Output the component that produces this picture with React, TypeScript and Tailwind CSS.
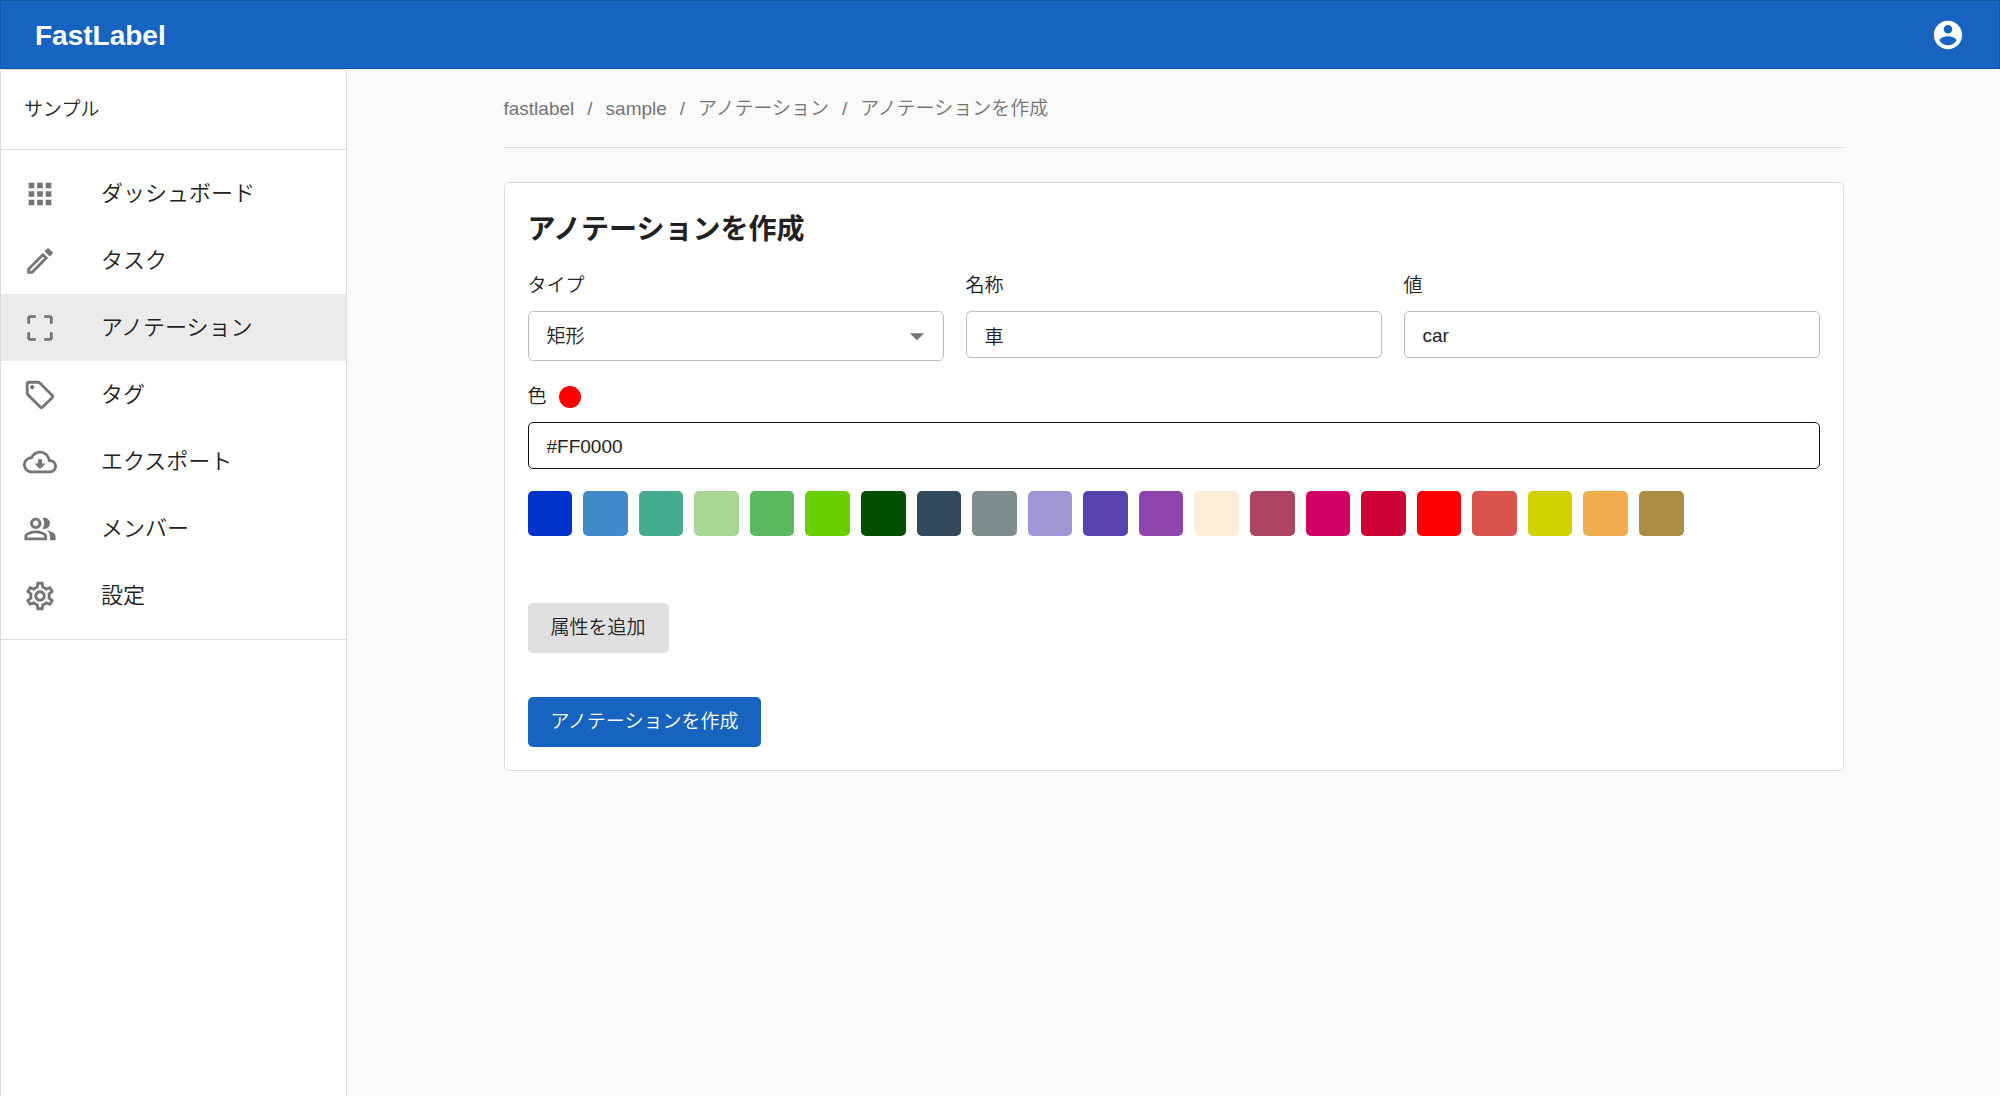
import { useState } from 'react'
import type { ReactNode } from 'react'
import { MdApps, MdArrowDropDown, MdCropFree, MdOutlineLocalOffer, MdOutlineSettings } from 'react-icons/md'

interface IconProps {
  className?: string
}

function SvgIcon({ className, children }: IconProps & { children: ReactNode }) {
  return (
    <svg viewBox="0 0 24 24" className={className} fill="currentColor" aria-hidden="true">
      {children}
    </svg>
  )
}

function AccountIcon({ className }: IconProps) {
  return (
    <SvgIcon className={className}>
      <path d="M12 2C6.48 2 2 6.48 2 12s4.48 10 10 10 10-4.48 10-10S17.52 2 12 2zm0 3c1.66 0 3 1.34 3 3s-1.34 3-3 3-3-1.34-3-3 1.34-3 3-3zm0 14.2c-2.5 0-4.71-1.28-6-3.22.03-1.99 4-3.08 6-3.08 1.99 0 5.97 1.09 6 3.08-1.29 1.94-3.5 3.22-6 3.22z" />
    </SvgIcon>
  )
}

function PencilIcon({ className }: IconProps) {
  return (
    <SvgIcon className={className}>
      <path d="M14.06 9.02l.92.92L5.92 19H5v-.92l9.06-9.06M17.66 3c-.25 0-.51.1-.7.29l-1.83 1.83 3.75 3.75 1.83-1.83c.39-.39.39-1.02 0-1.41l-2.34-2.34c-.2-.2-.45-.29-.71-.29zm-3.6 3.19L3 17.25V21h3.75L17.81 9.94l-3.75-3.75z" />
    </SvgIcon>
  )
}

function CloudDownloadIcon({ className }: IconProps) {
  return (
    <SvgIcon className={className}>
      <path d="M19.35 10.04C18.67 6.59 15.64 4 12 4 9.11 4 6.6 5.64 5.35 8.04 2.34 8.36 0 10.91 0 14c0 3.31 2.69 6 6 6h13c2.76 0 5-2.24 5-5 0-2.64-2.05-4.78-4.65-4.96zM19 18H6c-2.21 0-4-1.79-4-4 0-2.05 1.53-3.76 3.56-3.97l1.07-.11.5-.95C8.08 7.14 9.94 6 12 6c2.62 0 4.88 1.86 5.39 4.43l.3 1.5 1.53.11c1.56.1 2.78 1.41 2.78 2.96 0 1.65-1.35 3-3 3z" />
      <path d="M13.45 10h-2.9v3H8l4 4 4-4h-2.55z" />
    </SvgIcon>
  )
}

function PeopleIcon({ className }: IconProps) {
  return (
    <SvgIcon className={className}>
      <path d="M16.67 13.13C18.04 14.06 19 15.32 19 17v3h4v-3c0-2.18-3.57-3.47-6.33-3.87z" />
      <path d="M15 12c2.21 0 4-1.79 4-4s-1.79-4-4-4c-.47 0-.91.1-1.33.24C14.5 5.27 15 6.58 15 8s-.5 2.73-1.33 3.76c.42.14.86.24 1.33.24z" />
      <path d="M9 12c2.21 0 4-1.79 4-4s-1.79-4-4-4-4 1.79-4 4 1.79 4 4 4zm0-6c1.1 0 2 .9 2 2s-.9 2-2 2-2-.9-2-2 .9-2 2-2zM9 13c-2.67 0-8 1.34-8 4v3h16v-3c0-2.66-5.33-4-8-4zm6 5H3v-.99C3.2 16.29 6.3 15 9 15s5.8 1.29 6 2v1z" />
    </SvgIcon>
  )
}

const menuItems = [
  { label: 'ダッシュボード', icon: MdApps },
  { label: 'タスク', icon: PencilIcon },
  { label: 'アノテーション', icon: MdCropFree, active: true },
  { label: 'タグ', icon: MdOutlineLocalOffer },
  { label: 'エクスポート', icon: CloudDownloadIcon },
  { label: 'メンバー', icon: PeopleIcon },
  { label: '設定', icon: MdOutlineSettings },
]

const breadcrumbs = ['fastlabel', 'sample', 'アノテーション', 'アノテーションを作成']

const colors = [
  '#0033CC', '#428BCA', '#44AD8E', '#A8D695', '#5CB85C', '#69D100', '#004E00',
  '#34495E', '#7F8C8D', '#A295D6', '#5843AD', '#8E44AD', '#FFECDB', '#AD4363',
  '#D10069', '#CC0033', '#FF0000', '#D9534F', '#D1D100', '#F0AD4E', '#AD8D43',
]

const fieldClass =
  'block w-full rounded-[5px] border bg-white px-[18px] pt-0.5 text-[19px] text-[#212121] outline-none'

function Header() {
  return (
    <header className="flex h-[69px] items-center justify-between border border-[#1155a5] bg-[#1764c0] px-[34px] text-white">
      <a href="#" className="pt-0.5 text-[28px] leading-8 font-bold">FastLabel</a>
      <button type="button" aria-label="アカウント">
        <AccountIcon className="h-[34px] w-[34px]" />
      </button>
    </header>
  )
}

function Sidebar() {
  return (
    <aside className="w-[347px] shrink-0 rounded-t-[5px] border border-b-0 border-[#dcdcdc] bg-white">
      <div className="flex h-20 items-center border-b border-[#dcdcdc] px-[23px] pt-0.5 text-[19px]">サンプル</div>
      <nav className="border-b border-[#dcdcdc] py-[10px]">
        {menuItems.map(({ label, icon: Icon, active }) => (
          <a
            key={label}
            href="#"
            className={`flex h-[67px] items-center gap-11 px-[22px] text-[22px] ${active ? 'bg-[#ebebeb]' : ''}`}
          >
            <Icon className="h-[34px] w-[34px] shrink-0 text-[#757575]" />
            <span>{label}</span>
          </a>
        ))}
      </nav>
    </aside>
  )
}

function Field({ id, label, children }: { id: string; label: string; children: ReactNode }) {
  return (
    <div>
      <label htmlFor={id} className="mb-[11px] block text-[19px] leading-7">{label}</label>
      {children}
    </div>
  )
}

export default function App() {
  const [type, setType] = useState('矩形')
  const [name, setName] = useState('車')
  const [value, setValue] = useState('car')
  const [color, setColor] = useState('#FF0000')

  return (
    <div className="flex min-h-screen flex-col bg-[#fafafa] font-['Liberation_Sans','Noto_Sans_CJK_JP',sans-serif] font-[350] text-[#212121]">
      <Header />
      <div className="flex grow">
        <Sidebar />
        <main className="min-w-0 grow">
          <div className="mx-auto max-w-[1340px]">
            {/* Breadcrumbs */}
            <nav className="flex h-[79px] items-center border-b border-[#dcdcdc] pt-0.5 text-[19px] text-[#757575]">
              {breadcrumbs.map((crumb, i) => (
                <span key={crumb} className="flex">
                  {i > 0 && <span className="mx-[13px]">/</span>}
                  <a href="#">{crumb}</a>
                </span>
              ))}
            </nav>

            {/* Form */}
            <form
              onSubmit={e => e.preventDefault()}
              className="mt-[34px] rounded-[5px] border border-[#dcdcdc] bg-white px-[23px] pt-[25px] pb-[23px]"
            >
              <h1 className="text-[28px] leading-[44px] font-bold">アノテーションを作成</h1>

              <div className="mt-5 grid grid-cols-3 items-start gap-[22px]">
                <Field id="type" label="タイプ">
                  <div className="relative">
                    <select
                      id="type"
                      value={type}
                      onChange={e => setType(e.target.value)}
                      className={`${fieldClass} h-[50px] appearance-none border-[#bdbdbd]`}
                    >
                      <option>矩形</option>
                    </select>
                    <MdArrowDropDown className="pointer-events-none absolute top-2 right-[10px] h-[34px] w-[34px] text-[#757575]" />
                  </div>
                </Field>
                <Field id="name" label="名称">
                  <input
                    id="name"
                    value={name}
                    onChange={e => setName(e.target.value)}
                    className={`${fieldClass} h-[47px] border-[#bdbdbd]`}
                  />
                </Field>
                <Field id="value" label="値">
                  <input
                    id="value"
                    value={value}
                    onChange={e => setValue(e.target.value)}
                    className={`${fieldClass} h-[47px] border-[#bdbdbd]`}
                  />
                </Field>
              </div>

              <div className="mt-[22px] flex items-center gap-3">
                <label htmlFor="color" className="text-[19px] leading-7">色</label>
                <span className="h-[22px] w-[22px] rounded-full" style={{ backgroundColor: color }} />
              </div>
              <input
                id="color"
                value={color}
                onChange={e => setColor(e.target.value)}
                className={`${fieldClass} mt-[11px] h-[47px] border-[#111]`}
              />

              {/* Palette */}
              <div className="mt-[22px] grid max-w-[1156px] grid-cols-[repeat(21,minmax(0,1fr))] gap-[11px]">
                {colors.map(c => (
                  <button
                    key={c}
                    type="button"
                    aria-label={c}
                    onClick={() => setColor(c)}
                    className="h-[45px] rounded-[5px]"
                    style={{ backgroundColor: c }}
                  />
                ))}
              </div>

              <div className="mt-[67px] flex flex-col items-start gap-11">
                <button type="button" className="h-[50px] rounded-[5px] bg-[#e0e0e0] px-[23px] text-[19px]">
                  属性を追加
                </button>
                <button type="submit" className="h-[50px] rounded-[5px] bg-[#1764c0] px-[23px] text-[19px] text-white">
                  アノテーションを作成
                </button>
              </div>
            </form>
          </div>
        </main>
      </div>
    </div>
  )
}
